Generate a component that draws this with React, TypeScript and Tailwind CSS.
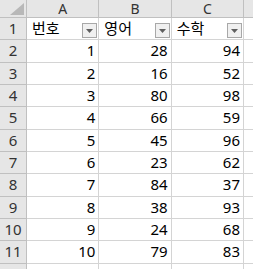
const rows: [number, number, number][] = [
  [1, 28, 94],
  [2, 16, 52],
  [3, 80, 98],
  [4, 66, 59],
  [5, 45, 96],
  [6, 23, 62],
  [7, 84, 37],
  [8, 38, 93],
  [9, 24, 68],
  [10, 79, 83],
];

function FilterButton() {
  return (
    <div className="absolute right-[1px] bottom-[1px] w-[15px] h-[15px] border border-[#a8a8a8] bg-[#f0f0f0] flex items-center justify-center">
      <svg width="7" height="4" viewBox="0 0 7 4">
        <path d="M0 0h7L3.5 4z" fill="#5f5f5f" />
      </svg>
    </div>
  );
}

const grid = "grid grid-cols-[27px_72.33px_72.33px_72.33px_1fr]";
const rowHead =
  "bg-[#e6e6e6] border-r border-b border-[#c0c0c0] flex items-center justify-center text-[#333]";
const cell = "border-r border-b border-[#d4d4d4] flex items-center justify-end pr-[3px] text-black";

export default function App() {
  return (
    <div
      className="w-[253px] h-[269px] overflow-hidden bg-white text-[15px] leading-none"
      style={{ fontFamily: '"Noto Sans", "Noto Sans CJK KR", sans-serif' }}
    >
      {/* column headers */}
      <div className={`${grid} h-[18px]`}>
        <div className="relative bg-[#e6e6e6] border-r border-b border-[#c0c0c0]">
          <svg className="absolute right-[2px] bottom-[2px]" width="14" height="12" viewBox="0 0 14 12">
            <path d="M14 0V12H0z" fill="#b8b8b8" />
          </svg>
        </div>
        {["A", "B", "C", ""].map((c, i) => (
          <div
            key={i}
            className={`bg-[#e6e6e6] border-b border-[#c0c0c0] flex items-center justify-center text-[#333] text-[14px] leading-[17px] ${i === 3 ? "" : "border-r"}`}
          >
            {c}
          </div>
        ))}
      </div>

      {/* row 1: headers with filters */}
      <div className={`${grid} h-[22.33px]`}>
        <div className={rowHead}>1</div>
        {["번호", "영어", "수학"].map((t) => (
          <div key={t} className="relative border-r border-b border-[#d4d4d4] flex items-center pl-[5px] text-black">
            {t}
            <FilterButton />
          </div>
        ))}
        <div className="border-b border-[#d4d4d4]" />
      </div>

      {rows.map(([n, e, m], i) => (
        <div key={n} className={`${grid} h-[22.33px]`}>
          <div className={rowHead}>{i + 2}</div>
          <div className={cell}>{n}</div>
          <div className={cell}>{e}</div>
          <div className={cell}>{m}</div>
          <div className="border-b border-[#d4d4d4]" />
        </div>
      ))}

      <div className={`${grid} h-[22.33px]`}>
        <div className={rowHead}>12</div>
        <div className={cell} />
        <div className={cell} />
        <div className={cell} />
        <div className="border-b border-[#d4d4d4]" />
      </div>
    </div>
  );
}
